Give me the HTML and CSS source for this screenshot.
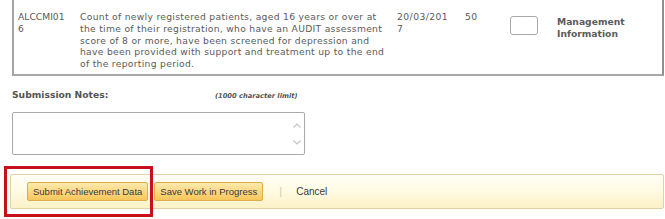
FILE: index.html
```html
<!DOCTYPE html>
<html>
<head>
<meta charset="utf-8">
<link rel="stylesheet" href="styles.css">
</head>
<body>
<div class="table">
  <div class="row">
    <div class="c-code">ALCCMI016</div>
    <div class="c-desc">Count of newly registered patients, aged 16 years or over at the time of their registration, who have an AUDIT assessment score of 8 or more, have been screened for depression and have been provided with support and treatment up to the end of the reporting period.</div>
    <div class="c-date">20/03/2017</div>
    <div class="c-num">50</div>
    <div class="c-input"><span class="box"></span></div>
    <div class="c-type">Management Information</div>
  </div>
</div>

<div class="notes">
  <div class="notes-head">
    <span class="notes-label">Submission Notes:</span>
    <span class="notes-limit">(1000 character limit)</span>
  </div>
  <div class="ta-wrap">
    <textarea class="ta"></textarea>
    <svg class="ta-arrows" width="10" height="30" viewBox="0 0 10 30">
      <path d="M1.5 8.5 L5 5 L8.5 8.5" fill="none" stroke="#c4c4c4" stroke-width="1.2"/>
      <path d="M1.5 21.5 L5 25 L8.5 21.5" fill="none" stroke="#c4c4c4" stroke-width="1.2"/>
    </svg>
  </div>
</div>

<div class="actions">
  <button class="btn">Submit Achievement Data</button>
  <button class="btn">Save Work in Progress</button>
  <span class="sep">|</span>
  <a class="cancel">Cancel</a>
</div>
<div class="highlight"></div>
</body>
</html>
```

FILE: styles.css
```css
html, body {
  margin: 0;
  padding: 0;
  background: #fff;
}
body {
  width: 665px;
  height: 219px;
  overflow: hidden;
  position: relative;
  font-family: "DejaVu Sans", Verdana, sans-serif;
  color: #5a5a5a;
}
.table {
  margin-left: 12px;
  width: 648px;
  border-left: 2px solid #a3a3a3;
  border-right: 2px solid #8f8f8f;
  border-bottom: 2px solid #a8a8a8;
}
.row {
  display: grid;
  grid-template-columns: 62px 317px 68px 45px 47px 1fr;
  padding: 11px 0 4px 4px;
  font-size: 9.2px;
  line-height: 11.8px;
}
.c-code {
  width: 50px;
  word-break: break-all;
}
.c-desc {
  width: 306px;
  letter-spacing: 0.3px;
}
.c-date {
  width: 54px;
  letter-spacing: 0.45px;
  word-break: break-all;
}
.c-num {
  letter-spacing: 0.4px;
}
.box {
  display: block;
  margin-top: 5px;
  width: 26px;
  height: 17px;
  border: 1px solid #a9a9a9;
  border-radius: 3px;
}
.c-type {
  margin-top: 5px;
  font-weight: bold;
  line-height: 12px;
  color: #5c5c5c;
}
.notes {
  margin-left: 12px;
  margin-top: 13px;
}
.notes-head {
  display: flex;
  align-items: baseline;
  height: 17px;
}
.notes-label {
  font-weight: bold;
  font-size: 9.2px;
  color: #555;
  width: 203px;
}
.notes-limit {
  font-size: 6.7px;
  font-weight: bold;
  font-style: italic;
  color: #555;
}
.ta-wrap {
  position: relative;
  margin-top: 6px;
  width: 293px;
  height: 43px;
}
.ta {
  display: block;
  box-sizing: border-box;
  width: 293px;
  height: 43px;
  margin: 0;
  border: 1px solid #aaa;
  border-radius: 2px;
  resize: none;
  background: #fff;
  outline: none;
}
.ta-arrows {
  position: absolute;
  right: 3px;
  top: 7px;
}
.actions {
  margin: 19px 0 0 10px;
  box-sizing: border-box;
  width: 654px;
  height: 35px;
  border: 1px solid #ddd3a6;
  border-radius: 2px;
  background: linear-gradient(#fffef6 0%, #fffbe4 45%, #fcf2c6 100%);
  display: flex;
  align-items: center;
  padding-left: 16px;
}
.btn {
  font-family: "Liberation Sans", Arial, sans-serif;
  font-size: 9.5px;
  color: #3a3a3a;
  height: 19px;
  margin: 0 6px 0 0;
  padding: 0 5px;
  border: 1px solid #dcae4c;
  border-radius: 2px;
  background: linear-gradient(#fde9ae 0%, #fbd67f 55%, #f8c65a 100%);
}
.sep {
  font-family: "Liberation Sans", Arial, sans-serif;
  color: #d2c9a8;
  font-size: 11px;
  margin-left: 10px;
}
.cancel {
  font-family: "Liberation Sans", Arial, sans-serif;
  font-size: 10px;
  color: #3a3a3a;
  margin-left: 14px;
}
.highlight {
  position: absolute;
  left: 4px;
  top: 166px;
  width: 143px;
  height: 45px;
  border: 3px solid #c8101d;
}
```
